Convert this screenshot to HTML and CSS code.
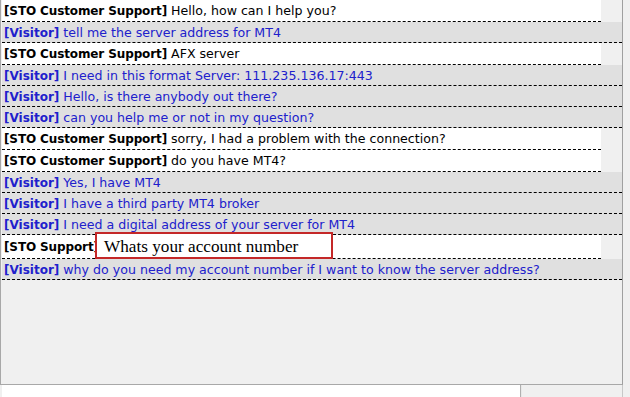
FILE: index.html
```html
<!DOCTYPE html>
<html lang="en">

<head>
  <meta charset="UTF-8" />
  <title>Live Chat</title>
  <link rel="stylesheet" href="styles.css">
</head>

<body>
  <div class="chat-window">
    <div class="chat-log">
      <div class="msg support"><b>[STO Customer Support]</b> Hello, how can I help you?</div>
      <div class="msg visitor"><b>[Visitor]</b> tell me the server address for MT4</div>
      <div class="msg support"><b>[STO Customer Support]</b> AFX server</div>
      <div class="msg visitor"><b>[Visitor]</b> I need in this format Server: 111.235.136.17:443</div>
      <div class="msg visitor"><b>[Visitor]</b> Hello, is there anybody out there?</div>
      <div class="msg visitor"><b>[Visitor]</b> can you help me or not in my question?</div>
      <div class="msg support"><b>[STO Customer Support]</b> sorry, I had a problem with the connection?</div>
      <div class="msg support"><b>[STO Customer Support]</b> do you have MT4?</div>
      <div class="msg visitor"><b>[Visitor]</b> Yes, I have MT4</div>
      <div class="msg visitor"><b>[Visitor]</b> I have a third party MT4 broker</div>
      <div class="msg visitor"><b>[Visitor]</b> I need a digital address of your server for MT4</div>
      <div class="msg support editing"><b>[STO Support]</b><span class="edit-box">Whats your account number</span></div>
      <div class="msg visitor"><b>[Visitor]</b> why do you need my account number if I want to know the server address?</div>
    </div>
    <div class="composer">
      <div class="composer-input"></div>
      <div class="composer-send"></div>
    </div>
  </div>
</body>

</html>
```

FILE: styles.css
```css
body {
  margin: 0;
  background: #f0f0f0;
  font-family: "DejaVu Sans", Verdana, sans-serif;
  font-size: 12.6px;
}

.chat-window {
  width: 623px;
  height: 397px;
  display: flex;
  flex-direction: column;
}

.chat-log {
  height: 384px;
  flex-shrink: 0;
  border-left: 1px solid #a8a8a8;
  border-right: 1px solid #a0a0a0;
  border-bottom: 1px solid #a8a8a8;
  padding-left: 1px;
  background: #f0f0f0;
}

.msg {
  height: 20px;
  line-height: 21px;
  padding-left: 2px;
  border-bottom: 1px dashed #000;
  white-space: nowrap;
}

.msg b {
  font-size: 12px;
}

.msg.support {
  height: 21px;
  background: #fff;
  color: #000;
  margin-right: 21px;
}

.msg.support b {
  letter-spacing: -0.12px;
}

.msg.visitor {
  background: #e0e0e0;
  color: #2020cc;
}

.msg.editing {
  height: 23px;
  line-height: 24px;
  position: relative;
}

.edit-box {
  position: absolute;
  left: 93px;
  top: -3px;
  width: 227px;
  height: 23px;
  padding-left: 7px;
  border: 2px solid #c42828;
  background: #fff;
  font-family: "Liberation Serif", "Times New Roman", serif;
  font-size: 17.2px;
  line-height: 25px;
  letter-spacing: 0;
}

.composer {
  flex: 1;
  display: flex;
  border-right: 1px solid #c8c8c8;
}

.composer-input {
  width: 518px;
  margin-left: 2px;
  background: #fff;
  border-right: 1px solid #b0b0b0;
}

.composer-send {
  flex: 1;
  background: #f0f0f0;
  border-left: 1px solid #e8e8e8;
}
```
